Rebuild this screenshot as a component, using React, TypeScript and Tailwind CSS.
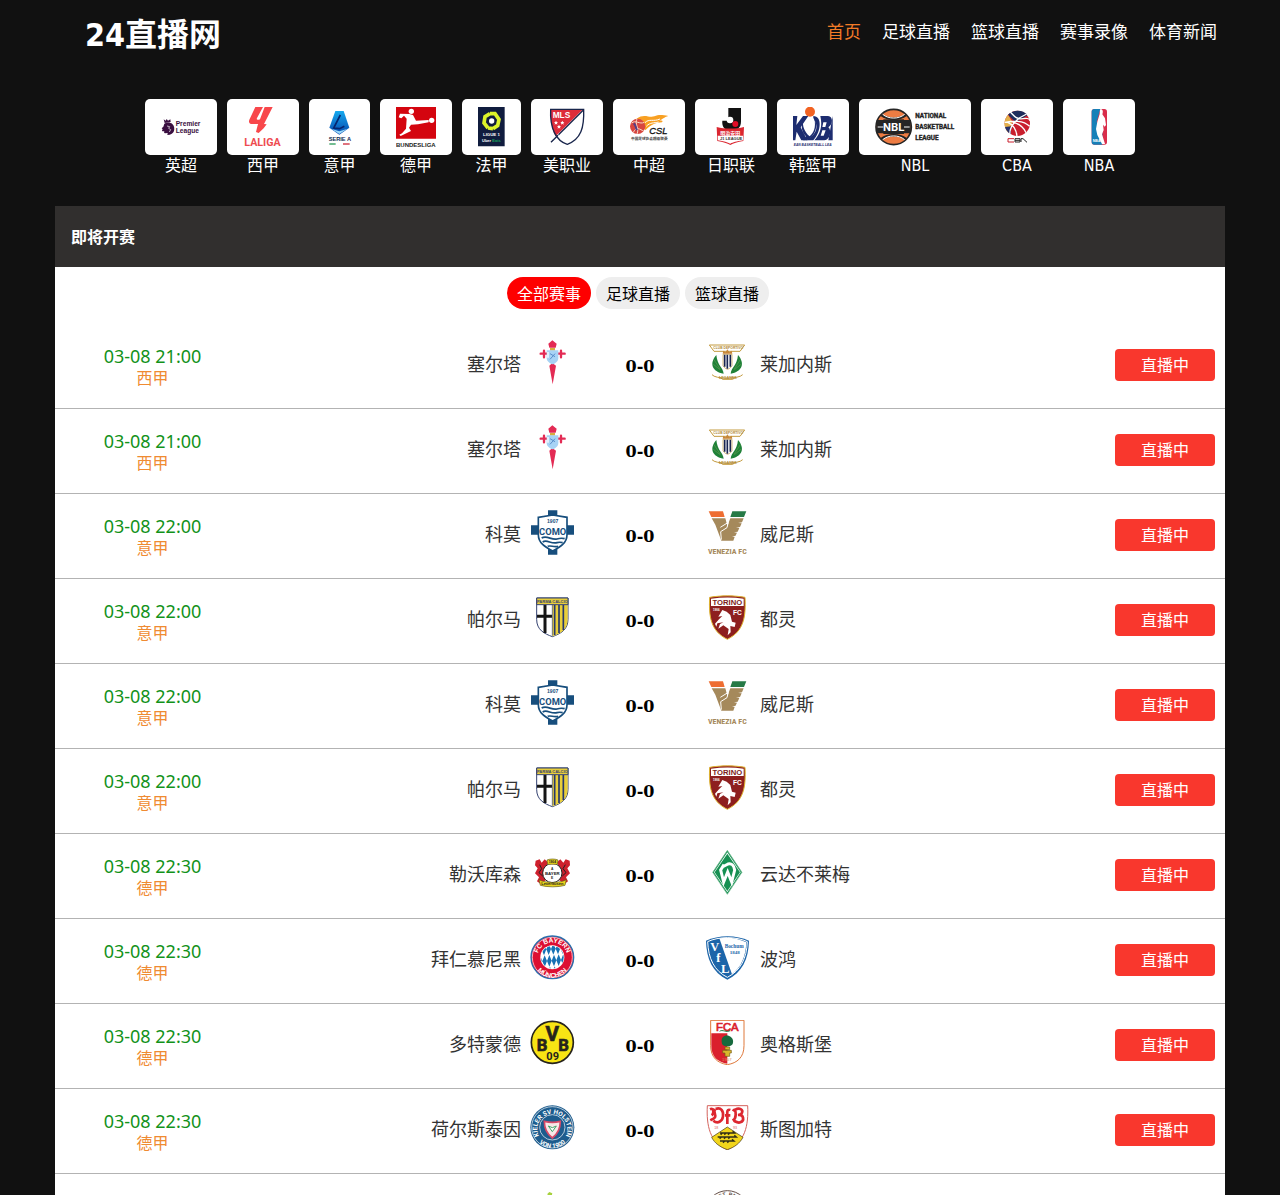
import { useState, type ReactNode } from "react";

const navItems = ["首页", "足球直播", "篮球直播", "赛事录像", "体育新闻"];

const tabs = ["全部赛事", "足球直播", "篮球直播"];

interface League {
  name: string;
  width: number;
  logo: ReactNode;
}

interface Match {
  time: string;
  league: string;
  home: string;
  away: string;
}

// every logo is drawn 120 units high
const leagues: League[] = [
  {
    name: "英超",
    width: 40,
    logo: (
      <>
        <g fill="#3a0f40">
          <path d="M8 37l6 4 3-5 4 5 7-4 1 8-18 3z" />
          <path d="M10 50c7-5 18-5 24 1 6 5 7 14 5 21-2 7-9 12-20 12l1-6-8 1c-3 0-3-2-2-6H4c-2-2 0-4 1-6l-3-3 5-5z" />
        </g>
        <path d="M18 57l8 2-3 5 6 4-4 7" fill="none" stroke="#fff" strokeWidth="2" />
        <text x="44" y="58" fontSize="20" fontWeight="700" fill="#3a0f40">Premier</text>
        <text x="44" y="79" fontSize="20" fontWeight="700" fill="#3a0f40">League</text>
      </>
    ),
  },
  {
    name: "西甲",
    width: 40,
    logo: (
      <>
        <g fill="#f8474b">
          <path d="M37 0h23L42 33c-2 5 0 6 5 5l12-3-7 16H29c-10 0-13-5-10-13z" />
          <path d="M65 0h24L63 51l8 1-9 12-15 14-8-3 5-20z" />
        </g>
        <text x="4" y="118" fontSize="32" fontWeight="700" fill="#ee4b50" className="font-[Roboto]">LALIGA</text>
      </>
    ),
  },
  {
    name: "意甲",
    width: 29,
    logo: (
      <>
        <linearGradient id="serie" x1="0" y1="0" x2="0" y2="1">
          <stop offset="0" stopColor="#15a9ee" />
          <stop offset="1" stopColor="#0747ae" />
        </linearGradient>
        <path d="M31 12h25l17 50-30 21-30-21z" fill="url(#serie)" />
        <path d="M46 24L26 63l18 2 14-7" fill="none" stroke="#06256f" strokeWidth="5" />
        <path d="M20 66l23 15 23-15-23 7z" fill="#9ad9f8" />
        <text x="11" y="103" fontSize="17" fontWeight="700" fill="#0f2a4d">SERIE A</text>
        <path d="M13 111h19" stroke="#2d9c5a" strokeWidth="4" />
        <path d="M54 111h20" stroke="#cf2c3c" strokeWidth="4" />
      </>
    ),
  },
  {
    name: "德甲",
    width: 40,
    logo: (
      <>
        <path d="M0 0h120v95H0z" fill="#d4050f" />
        <g fill="#fff">
          <circle cx="46" cy="13" r="8" />
          <circle cx="107" cy="40" r="8" />
          <path d="M8 31l4-11 28 1 11 3 9 17 38-2v7l-32 6-21 1-6 9 6 10-31 15-4-4 8-4 12-14 2-30-8-9-8 8z" />
        </g>
        <text x="0" y="119" fontSize="18" fontWeight="700" fill="#222">BUNDESLIGA</text>
      </>
    ),
  },
  {
    name: "法甲",
    width: 27,
    logo: (
      <>
        <path d="M0 0h80v118H0z" fill="#101c3e" />
        <path d="M36 20L21 29l-3 19 12 15M45 65l14-9 4-19-12-17H36M30 63l15 2" fill="none" stroke="#dcf32a" strokeWidth="11" />
        <circle cx="41" cy="42" r="8" fill="#fff" />
        <text x="15" y="87" fontSize="13" fontWeight="700" fill="#fff">LIGUE 1</text>
        <text x="12" y="104" fontSize="12" fontWeight="700" fill="#fff">Uber <tspan fill="#16a05a">Eats</tspan></text>
      </>
    ),
  },
  {
    name: "美职业",
    width: 40,
    logo: (
      <>
        <path d="M11 7h99c2 55-8 90-49 105C28 102 8 65 11 7z" fill="#fff" />
        <path d="M11 7h97L26 88C14 68 10 40 11 7z" fill="#dd2c3a" />
        <path d="M11 7h99c2 55-8 90-49 105C28 102 8 65 11 7z" fill="none" stroke="#19264c" strokeWidth="4" />
        <path d="M12 106L110 8" stroke="#19264c" strokeWidth="4" />
        <path d="M32 81c6 12 15 19 29 26" fill="none" stroke="#fff" strokeWidth="2" />
        <text x="17" y="34" fontSize="25" fontWeight="700" fill="#fff">MLS</text>
        <g fill="#fff">
          <path d="M27 41l2 4h4l-3 3 1 5-4-3-4 3 1-5-3-3h4z" />
          <path d="M46 41l2 4h4l-3 3 1 5-4-3-4 3 1-5-3-3h4z" />
          <path d="M36 53l2 4h4l-3 3 1 5-4-3-4 3 1-5-3-3h4z" />
        </g>
      </>
    ),
  },
  {
    name: "中超",
    width: 40,
    logo: (
      <>
        <path d="M22 36C45 18 60 34 76 28c14-6 24-4 42-1-14 4-16 10-27 13 9 0 12 2 8 6-18 2-30 4-50 24l-8-28z" fill="#f8a022" />
        <path d="M48 47c12-13 25-2 45-11M52 58c12-13 22-9 37-13" fill="none" stroke="#fff" strokeWidth="3" />
        <circle cx="26" cy="58" r="23" fill="#d8463f" />
        <path d="M8 48c12-10 24 5 38-2M13 76c10-20 20-8 31-4M24 36c-8 14 8 28 0 45" fill="none" stroke="#f6dac6" strokeWidth="3" />
        <path d="M14 49c7 5 6 14 10 21" fill="none" stroke="#514089" strokeWidth="6" />
        <text x="61" y="82" fontSize="28" fontStyle="italic" fill="#111" stroke="#111" strokeWidth="1">CSL</text>
        <text x="6" y="99" fontSize="11" fontWeight="700" fill="#444" className="font-['Noto_Sans_CJK_SC']">中国足球协会超级联赛</text>
      </>
    ),
  },
  {
    name: "日职联",
    width: 40,
    logo: (
      <>
        <path d="M52 3h38v40c0 20-12 29-30 28-19 0-28-13-26-30h18z" fill="#111" />
        <circle cx="57" cy="39" r="10" fill="#fff" />
        <circle cx="73" cy="51" r="9" fill="#e00b26" />
        <path d="M17 60c25 6 57 6 82 0l-2 42c-18 3-30 7-39 12-9-5-22-9-39-12z" fill="#db2630" />
        <path d="M20 86h76v14c-20 3-30 6-38 10-8-4-20-7-37-10z" fill="#fff" />
        <text x="28" y="83" fontSize="15" fontWeight="700" fill="#fff" className="font-['Noto_Sans_CJK_SC']">明治安田</text>
        <text x="27" y="98" fontSize="12" fontWeight="700" fill="#333">J1 LEAGUE</text>
      </>
    ),
  },
  {
    name: "韩篮甲",
    width: 40,
    logo: (
      <>
        <g fill="#1d2d70">
          <path d="M0 27h13l-3 27 20-27h16L23 61l20 39H25L11 74 7 100H0z" />
          <path d="M61 27c27 0 24 46 0 73H42L60 62z" />
          <path d="M82 27h23c18 2 13 27 1 34 11 8 5 38-12 39H64c18-19 25-43 18-73z" />
          <path d="M119 27v73h-13z" />
        </g>
        <path d="M48 31c-22 20-20 42-5 55l-7 15c30-15 47-37 23-70 2 18 0 30-9 43-11-14-11-29-2-43z" fill="#fff" />
        <path d="M30 38c-8 22-2 40 9 50l-9 12h12C64 88 78 62 64 34c6 30-3 44-14 54C34 74 28 58 30 38z" fill="#1d2d70" />
        <path d="M91 46h10l-4 14h-9zM88 70h10l-6 16h-9z" fill="#fff" />
        <circle cx="51" cy="14" r="15" fill="#f26322" />
        <text x="2" y="117" fontSize="10" fontWeight="700" fontStyle="italic" fill="#1d2d70">EAN BASKETBALL LEA</text>
      </>
    ),
  },
  {
    name: "NBL",
    width: 80,
    logo: (
      <>
        <circle cx="56" cy="60" r="53" fill="#ed7c43" stroke="#252525" strokeWidth="5" />
        <path d="M5 39h102v40H5z" fill="#252525" />
        <path d="M19 24c20 15 54 15 74 0M19 96c20-15 54-15 74 0" fill="none" stroke="#252525" strokeWidth="8" />
        <path d="M23 22c18 15 48 15 66 0M23 98c18-15 48-15 66 0M8 60h96" fill="none" stroke="#fff" strokeWidth="3" />
        <path d="M25 37h62v44H25z" fill="#252525" />
        <text x="24" y="73" fontSize="34" fontWeight="700" fill="#fff" className="font-[Roboto]">NBL</text>
        <g fontSize="19" fontWeight="700" fill="#252525" stroke="#252525" strokeWidth="1" className="font-[Roboto]">
          <text x="121" y="34">NATIONAL</text>
          <text x="121" y="66">BASKETBALL</text>
          <text x="121" y="98">LEAGUE</text>
        </g>
      </>
    ),
  },
  {
    name: "CBA",
    width: 40,
    logo: (
      <>
        <circle cx="61" cy="49" r="38" fill="#c91f2d" />
        <path d="M33 23C48 8 78 6 91 25L56 46z" fill="#1d2c5c" />
        <path d="M33 23c-14 17-14 34-1 53l15-30z" fill="#e3b04c" />
        <path d="M24 60c3 9 8 16 17 22l2-24z" fill="#27306a" />
        <path d="M23 46c25-4 55-8 75 12M40 15c10 10 17 23 38 20s18 2 21 6M38 83c0-22 14-45 51-62M60 88c-2-20-8-34-28-42M87 77c-7-16-20-27-40-31" fill="none" stroke="#fff" strokeWidth="4" />
        <path d="M54 95h15v10H54zM54 100h15M72 105V95h6l12 11" fill="none" stroke="#252525" strokeWidth="3" />
        <path d="M51 95H33v10h18" fill="none" stroke="#c91f2d" strokeWidth="3" />
      </>
    ),
  },
  {
    name: "NBA",
    width: 40,
    logo: (
      <>
        <rect x="38" y="6" width="46" height="107" rx="8" fill="#d92e4b" />
        <path d="M46 6h18L53 45l17 30v38H46c-5 0-8-3-8-8V14c0-5 3-8 8-8z" fill="#1680b8" />
        <path d="M63 7c9-2 10 7 7 15l8 12 3 20-4 5-5-6 2 16-5 13 9 29h-9L55 84 51 66l4-22 7-23z" fill="#fff" />
        <text x="41" y="106" fontSize="11" fontWeight="700" fill="#fff">NBA</text>
      </>
    ),
  },
];

// team crests, 135 x 135 units
const crests: Record<string, ReactNode> = {
  塞尔塔: (
    <>
      <path d="M55 11L67 1l13 10-3 12H58zM58 77l9-8 11 8-10 56z" fill="#e32b54" />
      <path d="M32 41h20M82 41h22M42 32v20M93 32v20" stroke="#e32b54" strokeWidth="7" strokeLinecap="round" />
      <path d="M60 24h15v8H60z" fill="#d8ad3e" />
      <path d="M50 31h35v22c0 10-7 16-17 20-11-4-18-10-18-20z" fill="#a7d3f5" />
      <path d="M60 41l15 9M75 41L60 58" stroke="#5a8ecb" strokeWidth="3" />
      <path d="M54 36v17" stroke="#fff" strokeWidth="4" />
    </>
  ),
  莱加内斯: (
    <>
      <path d="M13 15h106L105 34H27z" fill="#fff" stroke="#c39a3e" strokeWidth="3" />
      <text x="25" y="28" fontSize="10" fontWeight="700" fill="#b18a35">CLUB DEPORTIVO</text>
      <path d="M34 45c-22 25-13 50 22 56-2-19-19-24-22-56zM99 45c22 25 13 50-22 56 2-19 19-24 22-56z" fill="#1f8138" />
      <path d="M27 59l19 29M25 73l20 16M106 59L87 88M108 73L88 89" stroke="#5f9c50" strokeWidth="2" />
      <path d="M54 43h27v34c-4 6-8 9-13 11-6-2-11-5-14-11z" fill="#fff" stroke="#c39a3e" strokeWidth="2" />
      <path d="M59 44v36M67 44v42M76 44v36" stroke="#182452" strokeWidth="5" />
      <path d="M53 41l2-9 7 5 5-9 6 9 7-5 2 9z" fill="#c78638" />
      <path d="M21 104c10 14 80 14 92 0M43 111l10 7h30l10-7" fill="none" stroke="#c39a3e" strokeWidth="3" />
      <text x="42" y="116" fontSize="11" fontWeight="700" fill="#b18a35">LEGANES</text>
    </>
  ),
  科莫: (
    <>
      <path d="M54 1h28v20H54zM54 113h28v21H54zM3 46h22v28H3zM110 46h22v28h-22z" fill="#174e7d" />
      <path d="M25 22l43-7 43 7v52c0 26-22 38-43 49-21-11-43-23-43-49z" fill="#fff" stroke="#174e7d" strokeWidth="5" />
      <text x="68" y="40" fontSize="15" fontWeight="700" fill="#174e7d" textAnchor="middle">1907</text>
      <text x="68" y="74" fontSize="28" fontWeight="700" fill="#174e7d" textAnchor="middle" className="font-[Roboto]">COMO</text>
      <path d="M35 84c16-9 29 7 46 3 9-3 12-4 23-1M38 96c13-9 25 7 43 2 7-2 9-2 17 0M53 109c9-4 17 3 31 0" fill="none" stroke="#174e7d" strokeWidth="5" />
    </>
  ),
  威尼斯: (
    <>
      <path d="M11 4h43l5 17H19z" fill="#ee6d31" />
      <path d="M82 4h42l-7 17H76z" fill="#267a46" />
      <path d="M20 25h41l6 23 9-23h40l-5 12-12 2 11 1-5 11-12 2 10 1-5 11-11 2 9 1-5 10-10 1 8 2-4 11H49L31 44z" fill="#a5895b" />
      <path d="M46 52l24-15-4 16-19 12 2 24" fill="none" stroke="#fff" strokeWidth="3" />
      <text x="67" y="131" fontSize="24" fontWeight="700" fill="#a5895b" textAnchor="middle" className="font-['Roboto_Condensed','Liberation_Sans_Narrow',Roboto]">VENEZIA FC</text>
    </>
  ),
  帕尔马: (
    <>
      <path d="M20 9h94v64c0 32-23 43-47 52-24-9-47-20-47-52z" fill="#fff" stroke="#344271" strokeWidth="3" />
      <path d="M67 30h46v43c0 32-22 43-46 51z" fill="#e8ce3b" />
      <path d="M74 30v90M87 30v84M100 30v75" stroke="#26386d" strokeWidth="5" />
      <path d="M45 30v84M21 64h45" stroke="#151515" strokeWidth="9" />
      <path d="M20 9h94v20H20z" fill="#e8ce3b" stroke="#344271" strokeWidth="3" />
      <text x="67" y="24" fontSize="12" fontWeight="700" fill="#344271" textAnchor="middle">PARMA CALCIO</text>
      <path d="M67 29v93" stroke="#344271" strokeWidth="2" />
    </>
  ),
  都灵: (
    <>
      <path d="M14 7c35-6 72-6 106 0 3 58-3 101-53 126C17 108 11 65 14 7z" fill="#8e1f1f" stroke="#dfb52e" strokeWidth="3" />
      <path d="M18 11c34-5 66-5 98 0v22H18z" fill="#fff" />
      <text x="67" y="31" fontSize="23" fontWeight="700" fill="#7e1d21" textAnchor="middle">TORINO</text>
      <text x="84" y="59" fontSize="20" fontWeight="700" fill="#fff">FC</text>
      <text x="24" y="49" fontSize="9" fontWeight="700" fill="#fff">1906</text>
      <path d="M52 45l13 5 11 10 5 20 11 3-3 13-13-3 1 19-9 9 3-19-16-11-15 10 5-14 10-5-18 3-3 10-4-9 12-13 10-10-12 2z" fill="#fff" />
    </>
  ),
  勒沃库森: (
    <>
      <path d="M17 32l12-4 6 10 9-10 10 9-9 21 8 29-22 14-10-7 6-12-12-12 8-15-8-9zM119 32l-12-4-7 10-9-10-10 9 9 21-8 29 22 14 10-7-6-12 12-12-8-15 8-9z" fill="#ce202d" />
      <path d="M29 44l6 12-8 12 11 10M106 44l-7 12 9 12-11 10" fill="none" stroke="#222" strokeWidth="3" />
      <circle cx="67" cy="69" r="29" fill="#fff" stroke="#222" strokeWidth="3" />
      <path d="M51 30c10-4 23-4 33 0l-2 13H53zM27 89c20 11 62 11 82 0l-4 17c-20 6-54 6-74 0z" fill="#e8d31d" stroke="#645a16" strokeWidth="2" />
      <text x="67" y="74" fontSize="13" fontWeight="700" fill="#222" textAnchor="middle">BAYER</text>
      <text x="63" y="60" fontSize="10" fontWeight="700" fill="#222">A</text>
      <text x="63" y="86" fontSize="10" fontWeight="700" fill="#222">E</text>
      <text x="56" y="40" fontSize="10" fontWeight="700" fill="#222">1904</text>
      <text x="67" y="106" fontSize="12" fontWeight="700" fill="#222" textAnchor="middle">Leverkusen</text>
    </>
  ),
  云达不莱梅: (
    <>
      <path d="M67 1l44 66-44 66-44-66z" fill="#169052" stroke="#74bd93" strokeWidth="2" />
      <path d="M67 7l40 60-40 60-40-60z" fill="#fff" />
      <path d="M67 11l38 56-38 56-38-56z" fill="#169052" />
      <path d="M57 44L47 60l9 36 12-30 12 30 9-36c-2-14-10-22-20-18L52 51" fill="none" stroke="#fff" strokeWidth="9" />
    </>
  ),
  拜仁慕尼黑: (
    <>
      <circle cx="67" cy="67" r="64" fill="#dc0f32" stroke="#2870ad" strokeWidth="4" />
      <circle cx="67" cy="67" r="60" fill="none" stroke="#fff" strokeWidth="2" />
      <circle cx="67" cy="67" r="36" fill="#fff" />
      <clipPath id="bayern"><circle cx="67" cy="67" r="34" /></clipPath>
      <g clipPath="url(#bayern)" fill="#1772b5">
        <path d="M35 44l7-17 7 16-7 18zM49 43l7-17 7 16-7 18zM63 42l7-17 7 16-7 18zM77 41l7-17 7 16-7 18zM91 40l7-17 7 16-7 18z" />
        <path d="M37 79l7-18 7 17-7 18zM51 78l7-18 7 17-7 18zM65 77l7-18 7 17-7 18zM79 76l7-18 7 17-7 18zM93 75l7-18 7 17-7 18zM23 79l7-18 7 17-7 18z" />
        <path d="M39 114l7-18 7 17-7 18zM53 113l7-18 7 17-7 18zM67 112l7-18 7 17-7 18zM81 111l7-18 7 17-7 18z" />
      </g>
      <path id="bayernTop" d="M24 81a45 45 0 1 1 86 0" fill="none" />
      <path id="bayernLow" d="M10 71a57 57 0 0 0 114 0" fill="none" />
      <g fontSize="20" fontWeight="700" fill="#fff" textAnchor="middle">
        <text><textPath href="#bayernTop" startOffset="50%">FC BAYERN</textPath></text>
        <text><textPath href="#bayernLow" startOffset="50%">MÜNCHEN</textPath></text>
      </g>
    </>
  ),
  波鸿: (
    <>
      <path d="M3 17C40-1 95-1 132 17c-1 54-21 96-65 117C23 113 4 71 3 17z" fill="#1c65a9" />
      <path d="M8 20C41 4 94 4 127 20c-2 50-20 87-60 107C27 107 10 70 8 20z" fill="#1c65a9" stroke="#fff" strokeWidth="3" />
      <path d="M43 10c25-5 57-1 81 12-2 45-17 76-43 96z" fill="#fff" />
      <g fill="#fff" fontWeight="700" className="font-['Liberation_Serif']">
        <text x="16" y="47" fontSize="37">V</text>
        <text x="34" y="80" fontSize="38">f</text>
        <text x="48" y="113" fontSize="38">L</text>
      </g>
      <g fill="#1c65a9" fontWeight="700" className="font-['Liberation_Serif']">
        <text x="59" y="38" fontSize="16">Bochum</text>
        <text x="74" y="58" fontSize="15">1848</text>
      </g>
    </>
  ),
  多特蒙德: (
    <>
      <circle cx="67" cy="67" r="63" fill="#f8e414" stroke="#26231c" strokeWidth="5" />
      <g fill="#26231c" stroke="#26231c" fontWeight="700" textAnchor="middle" className="font-[Roboto]">
        <text x="36" y="92" fontSize="50" strokeWidth="2">B</text>
        <text x="67" y="64" fontSize="62" strokeWidth="2">V</text>
        <text x="101" y="92" fontSize="50" strokeWidth="2">B</text>
        <text x="68" y="121" fontSize="33" strokeWidth="0">09</text>
      </g>
    </>
  ),
  奥格斯堡: (
    <>
      <path d="M17 1h100v76c0 35-20 52-50 57-30-5-50-22-50-57z" fill="#fff" stroke="#df783b" strokeWidth="3" />
      <path d="M19 40h48v91c-28-5-48-20-48-54z" fill="#da202c" />
      <text x="67" y="33" fontSize="34" fill="#da202c" stroke="#da202c" strokeWidth="2" textAnchor="middle">FCA</text>
      <path d="M44 34c8-7 20 5 31-2" fill="none" stroke="#267a46" strokeWidth="3" />
      <path d="M65 46c-15 3-17 13-14 25 4 10 27 11 32 1 4-12-1-23-18-26z" fill="#176a3d" />
      <path d="M53 91h26v8h-5v10H60V99h-7zM60 81h14v8H60z" fill="#d8b62b" stroke="#735b16" strokeWidth="2" />
      <text x="51" y="123" fontSize="13" fill="#d98c62">1907</text>
    </>
  ),
  荷尔斯泰因: (
    <>
      <circle cx="67" cy="67" r="66" fill="#1d5c8d" />
      <circle cx="67" cy="67" r="62" fill="none" stroke="#fff" strokeWidth="2" />
      <circle cx="67" cy="67" r="38" fill="#1d5c8d" stroke="#fff" strokeWidth="2" />
      <path d="M43 49c16 4 32 4 48 0 0 21-9 39-24 50-15-11-24-29-24-50z" fill="#f8e7e8" stroke="#d64a68" strokeWidth="5" />
      <path d="M55 63l12 5 12-5-12 17z" fill="#fff" stroke="#42a36b" strokeWidth="3" />
      <path id="kielTop" d="M25 88a45 45 0 1 1 84 0" fill="none" />
      <path id="kielLow" d="M8 70a59 59 0 0 0 118 0" fill="none" />
      <g fontSize="19" fontWeight="700" fill="#fff" textAnchor="middle" className="font-[Roboto]">
        <text><textPath href="#kielTop" startOffset="50%">KIELER SV HOLSTEIN</textPath></text>
        <text><textPath href="#kielLow" startOffset="50%">VON 1900</textPath></text>
      </g>
    </>
  ),
  斯图加特: (
    <>
      <path d="M7 2h121c3 60-8 111-61 132C14 113 4 62 7 2z" fill="#fff" stroke="#d5635d" strokeWidth="3" />
      <path d="M67 66l47 31c-10 18-24 29-47 37-22-8-38-19-47-37z" fill="#f2d51c" stroke="#3b3517" strokeWidth="2" />
      <path d="M45 84h44l-6-5M38 96h56l-6-5M45 108h42l-6-5M52 84l-5 5M63 84l-5 5M74 84l-5 5M49 96l-5 5M62 96l-5 5M75 96l-5 5M59 108l-5 5M72 108l-5 5" fill="none" stroke="#302c18" strokeWidth="4" />
      <g fill="none" stroke="#dd2730" strokeWidth="8">
        <path d="M15 13c13-6 12 13 5 18M32 12c16-7 24 7 22 22-2 15-16 24-29 13M30 12c-6 10 4 15 0 25-4 6-9 6-14 9" />
        <path d="M76 15c-12-4-9 8-9 20v22M60 31h16" />
        <path d="M84 19c7-11 8 2 8 10s-3 14-9 18M91 14c12-7 24 0 20 9-3 7-12 7-12 7 18-3 20 17 7 22-8 3-14-2-20-5" />
      </g>
      <text x="28" y="71" fontSize="11" fill="#dd5d60">18</text>
      <text x="84" y="71" fontSize="11" fill="#dd5d60">93</text>
    </>
  ),
  沃尔夫斯堡: (
    <>
      <circle cx="67" cy="74" r="60" fill="#fff" />
      <path d="M52 12l6-6 9 4-2 8H54z" fill="#a6d13c" />
      <circle cx="67" cy="76" r="56" fill="#65b32e" />
      <path d="M28 46l19 62 20-40 20 40 19-62" fill="none" stroke="#fff" strokeWidth="11" />
    </>
  ),
  圣保利: (
    <>
      <circle cx="67" cy="67" r="65" fill="#fff" stroke="#624c45" strokeWidth="3" />
      <path id="pauliTop" d="M18 67a49 49 0 0 1 98 0" fill="none" />
      <text fontSize="16" fontWeight="700" fill="#624c45" textAnchor="middle">
        <textPath href="#pauliTop" startOffset="50%">FC ST. PAULI</textPath>
      </text>
      <circle cx="67" cy="67" r="43" fill="#624c45" />
    </>
  ),
};

const matches: Match[] = [
  { time: "03-08 21:00", league: "西甲", home: "塞尔塔", away: "莱加内斯" },
  { time: "03-08 21:00", league: "西甲", home: "塞尔塔", away: "莱加内斯" },
  { time: "03-08 22:00", league: "意甲", home: "科莫", away: "威尼斯" },
  { time: "03-08 22:00", league: "意甲", home: "帕尔马", away: "都灵" },
  { time: "03-08 22:00", league: "意甲", home: "科莫", away: "威尼斯" },
  { time: "03-08 22:00", league: "意甲", home: "帕尔马", away: "都灵" },
  { time: "03-08 22:30", league: "德甲", home: "勒沃库森", away: "云达不莱梅" },
  { time: "03-08 22:30", league: "德甲", home: "拜仁慕尼黑", away: "波鸿" },
  { time: "03-08 22:30", league: "德甲", home: "多特蒙德", away: "奥格斯堡" },
  { time: "03-08 22:30", league: "德甲", home: "荷尔斯泰因", away: "斯图加特" },
  { time: "03-08 22:30", league: "德甲", home: "沃尔夫斯堡", away: "圣保利" },
];

function Header() {
  return (
    <header className="mx-auto flex h-[67px] max-w-[1170px] items-center justify-between pl-[30px] pr-2">
      <h1 className="pt-0.5 text-[32px] font-bold leading-[60px] text-white">
        <a href="#">24直播网</a>
      </h1>
      <nav className="flex gap-[21px] pb-1 text-[17px] leading-6 text-white">
        {navItems.map((item, i) => (
          <a key={item} href="#" className={i === 0 ? "text-[#f27b28]" : ""}>
            {item}
          </a>
        ))}
      </nav>
    </header>
  );
}

function LeagueCard({ name, width, logo }: League) {
  return (
    <a href="#" className="flex flex-col items-center">
      <span className="rounded-[5px] bg-white px-4 py-2">
        <svg
          width={width}
          height="40"
          viewBox={`0 0 ${width * 3} 120`}
          className="block font-['Liberation_Sans']"
          aria-hidden="true"
        >
          {logo}
        </svg>
      </span>
      <span className="text-base leading-[22px] text-white">{name}</span>
    </a>
  );
}

function Crest({ team }: { team: string }) {
  return (
    <svg
      viewBox="0 0 135 135"
      className="size-[45px] shrink-0 font-['Liberation_Sans']"
      aria-hidden="true"
    >
      {crests[team]}
    </svg>
  );
}

function MatchRow({ time, league, home, away }: Match) {
  return (
    <li className="grid h-[85px] grid-cols-[3fr_5fr_2fr_5fr_3fr] items-center border-b border-[#b3b3b3] pb-[7px]">
      <div className="pt-2 text-center">
        <p className="font-['Noto_Sans',sans-serif] text-lg leading-6 text-[#12921a]">{time}</p>
        <p className="text-base leading-[22px] text-[#ef8b32]">{league}</p>
      </div>
      <div className="flex items-center justify-end gap-[9px] text-lg text-[#333]">
        <span className="pt-1">{home}</span>
        <Crest team={home} />
      </div>
      <strong className="pt-2 text-center font-['DejaVu_Serif',serif] text-base text-black">
        0-0
      </strong>
      <div className="flex items-center gap-[10px] text-lg text-[#333]">
        <Crest team={away} />
        <span className="pt-1">{away}</span>
      </div>
      <div className="flex justify-end pr-[10px] pt-1">
        <a
          href="#"
          className="w-[100px] rounded-[4px] bg-[#f9372d] pt-0.5 text-center text-base leading-[30px] text-white"
        >
          直播中
        </a>
      </div>
    </li>
  );
}

export default function App() {
  const [activeTab, setActiveTab] = useState(0);

  return (
    <div className="h-screen overflow-hidden bg-[#111] font-['DejaVu_Sans_Condensed','Noto_Sans_CJK_SC',sans-serif]">
      <Header />
      <div className="flex justify-center gap-[10px] pt-8 pb-[29px]">
        {leagues.map((league) => (
          <LeagueCard key={league.name} {...league} />
        ))}
      </div>
      <main className="mx-auto max-w-[1170px] bg-white">
        <h2 className="bg-[#312f2e] px-4 pt-0.5 text-base font-bold leading-[59px] text-white">
          即将开赛
        </h2>
        <div className="flex justify-center gap-[5px] pt-[10px] pr-1 pb-[15px]">
          {tabs.map((tab, i) => (
            <button
              key={tab}
              type="button"
              onClick={() => setActiveTab(i)}
              className={`cursor-pointer rounded-full px-[10px] pt-1 text-base leading-7 ${
                i === activeTab ? "bg-[#fe0000] text-white" : "bg-[#eee] text-black"
              }`}
            >
              {tab}
            </button>
          ))}
        </div>
        <ul>
          {matches.map((match, i) => (
            <MatchRow key={i} {...match} />
          ))}
        </ul>
      </main>
    </div>
  );
}
